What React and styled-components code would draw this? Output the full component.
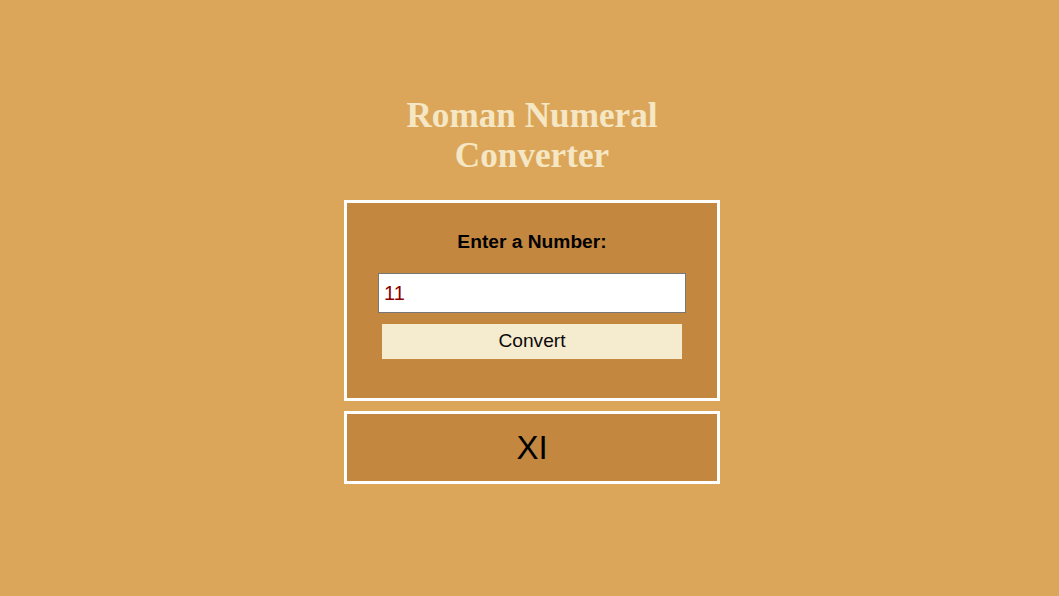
import React, { useState } from "react";
import styled, { createGlobalStyle } from "styled-components";

const GlobalStyle = createGlobalStyle`
  html, body {
    margin: 0;
    padding: 0;
    background-color: #dba65a;
    font-family: "Liberation Sans", Arial, sans-serif;
  }
`;

const Page = styled.div`
  min-height: 596px;
  padding-left: 5px;
  display: flex;
  justify-content: center;
`;

const Main = styled.main`
  width: 376px;
  padding-top: 96px;
  display: flex;
  flex-direction: column;
  align-items: center;
`;

const Title = styled.h1`
  margin: 0 0 24px;
  font-family: "Liberation Serif", "Times New Roman", serif;
  font-size: 35.2px;
  line-height: 40px;
  font-weight: bold;
  color: #f5e6c4;
  text-align: center;
  width: 300px;
`;

const Panel = styled.div`
  box-sizing: border-box;
  width: 376px;
  background-color: #c4873f;
  border: 3px solid #ffffff;
  display: flex;
  flex-direction: column;
  align-items: center;
`;

const Form = styled(Panel)`
  padding: 28px 0 39px;
`;

const Label = styled.label`
  font-size: 19.2px;
  line-height: 22px;
  font-weight: bold;
  color: #000;
  margin-bottom: 20px;
`;

const Input = styled.input`
  box-sizing: border-box;
  width: 308px;
  height: 40px;
  border: 1px solid #767676;
  padding: 0 5px;
  font-family: "Liberation Sans", Arial, sans-serif;
  font-size: 20px;
  color: #8b0000;
  background: #fff;
  outline: none;
`;

const Button = styled.button`
  box-sizing: border-box;
  width: 300px;
  height: 35px;
  margin-top: 11px;
  padding: 0 0 2px;
  border: none;
  background-color: #f5ebcf;
  font-family: "Liberation Sans", Arial, sans-serif;
  font-size: 19.2px;
  color: #0a0a0a;
  cursor: pointer;
`;

const Output = styled(Panel)`
  margin-top: 10px;
  height: 73px;
  justify-content: center;
  font-size: 33px;
  color: #000;
`;

function toRoman(num) {
  const map = [
    [1000, "M"], [900, "CM"], [500, "D"], [400, "CD"],
    [100, "C"], [90, "XC"], [50, "L"], [40, "XL"],
    [10, "X"], [9, "IX"], [5, "V"], [4, "IV"], [1, "I"],
  ];
  let out = "";
  for (const [v, s] of map) {
    while (num >= v) {
      out += s;
      num -= v;
    }
  }
  return out;
}

export default function App() {
  const [value, setValue] = useState("11");
  const [result, setResult] = useState("XI");

  const convert = (e) => {
    e.preventDefault();
    const n = parseInt(value, 10);
    if (!n || n < 1) setResult("Please enter a valid number");
    else if (n > 3999) setResult("Please enter a number less than or equal to 3999");
    else setResult(toRoman(n));
  };

  return (
    <>
      <GlobalStyle />
      <Page>
        <Main>
          <Title>Roman Numeral Converter</Title>
          <Form as="form" onSubmit={convert}>
            <Label htmlFor="number">Enter a Number:</Label>
            <Input
              id="number"
              type="number"
              value={value}
              onChange={(e) => setValue(e.target.value)}
            />
            <Button type="submit">Convert</Button>
          </Form>
          <Output>{result}</Output>
        </Main>
      </Page>
    </>
  );
}
